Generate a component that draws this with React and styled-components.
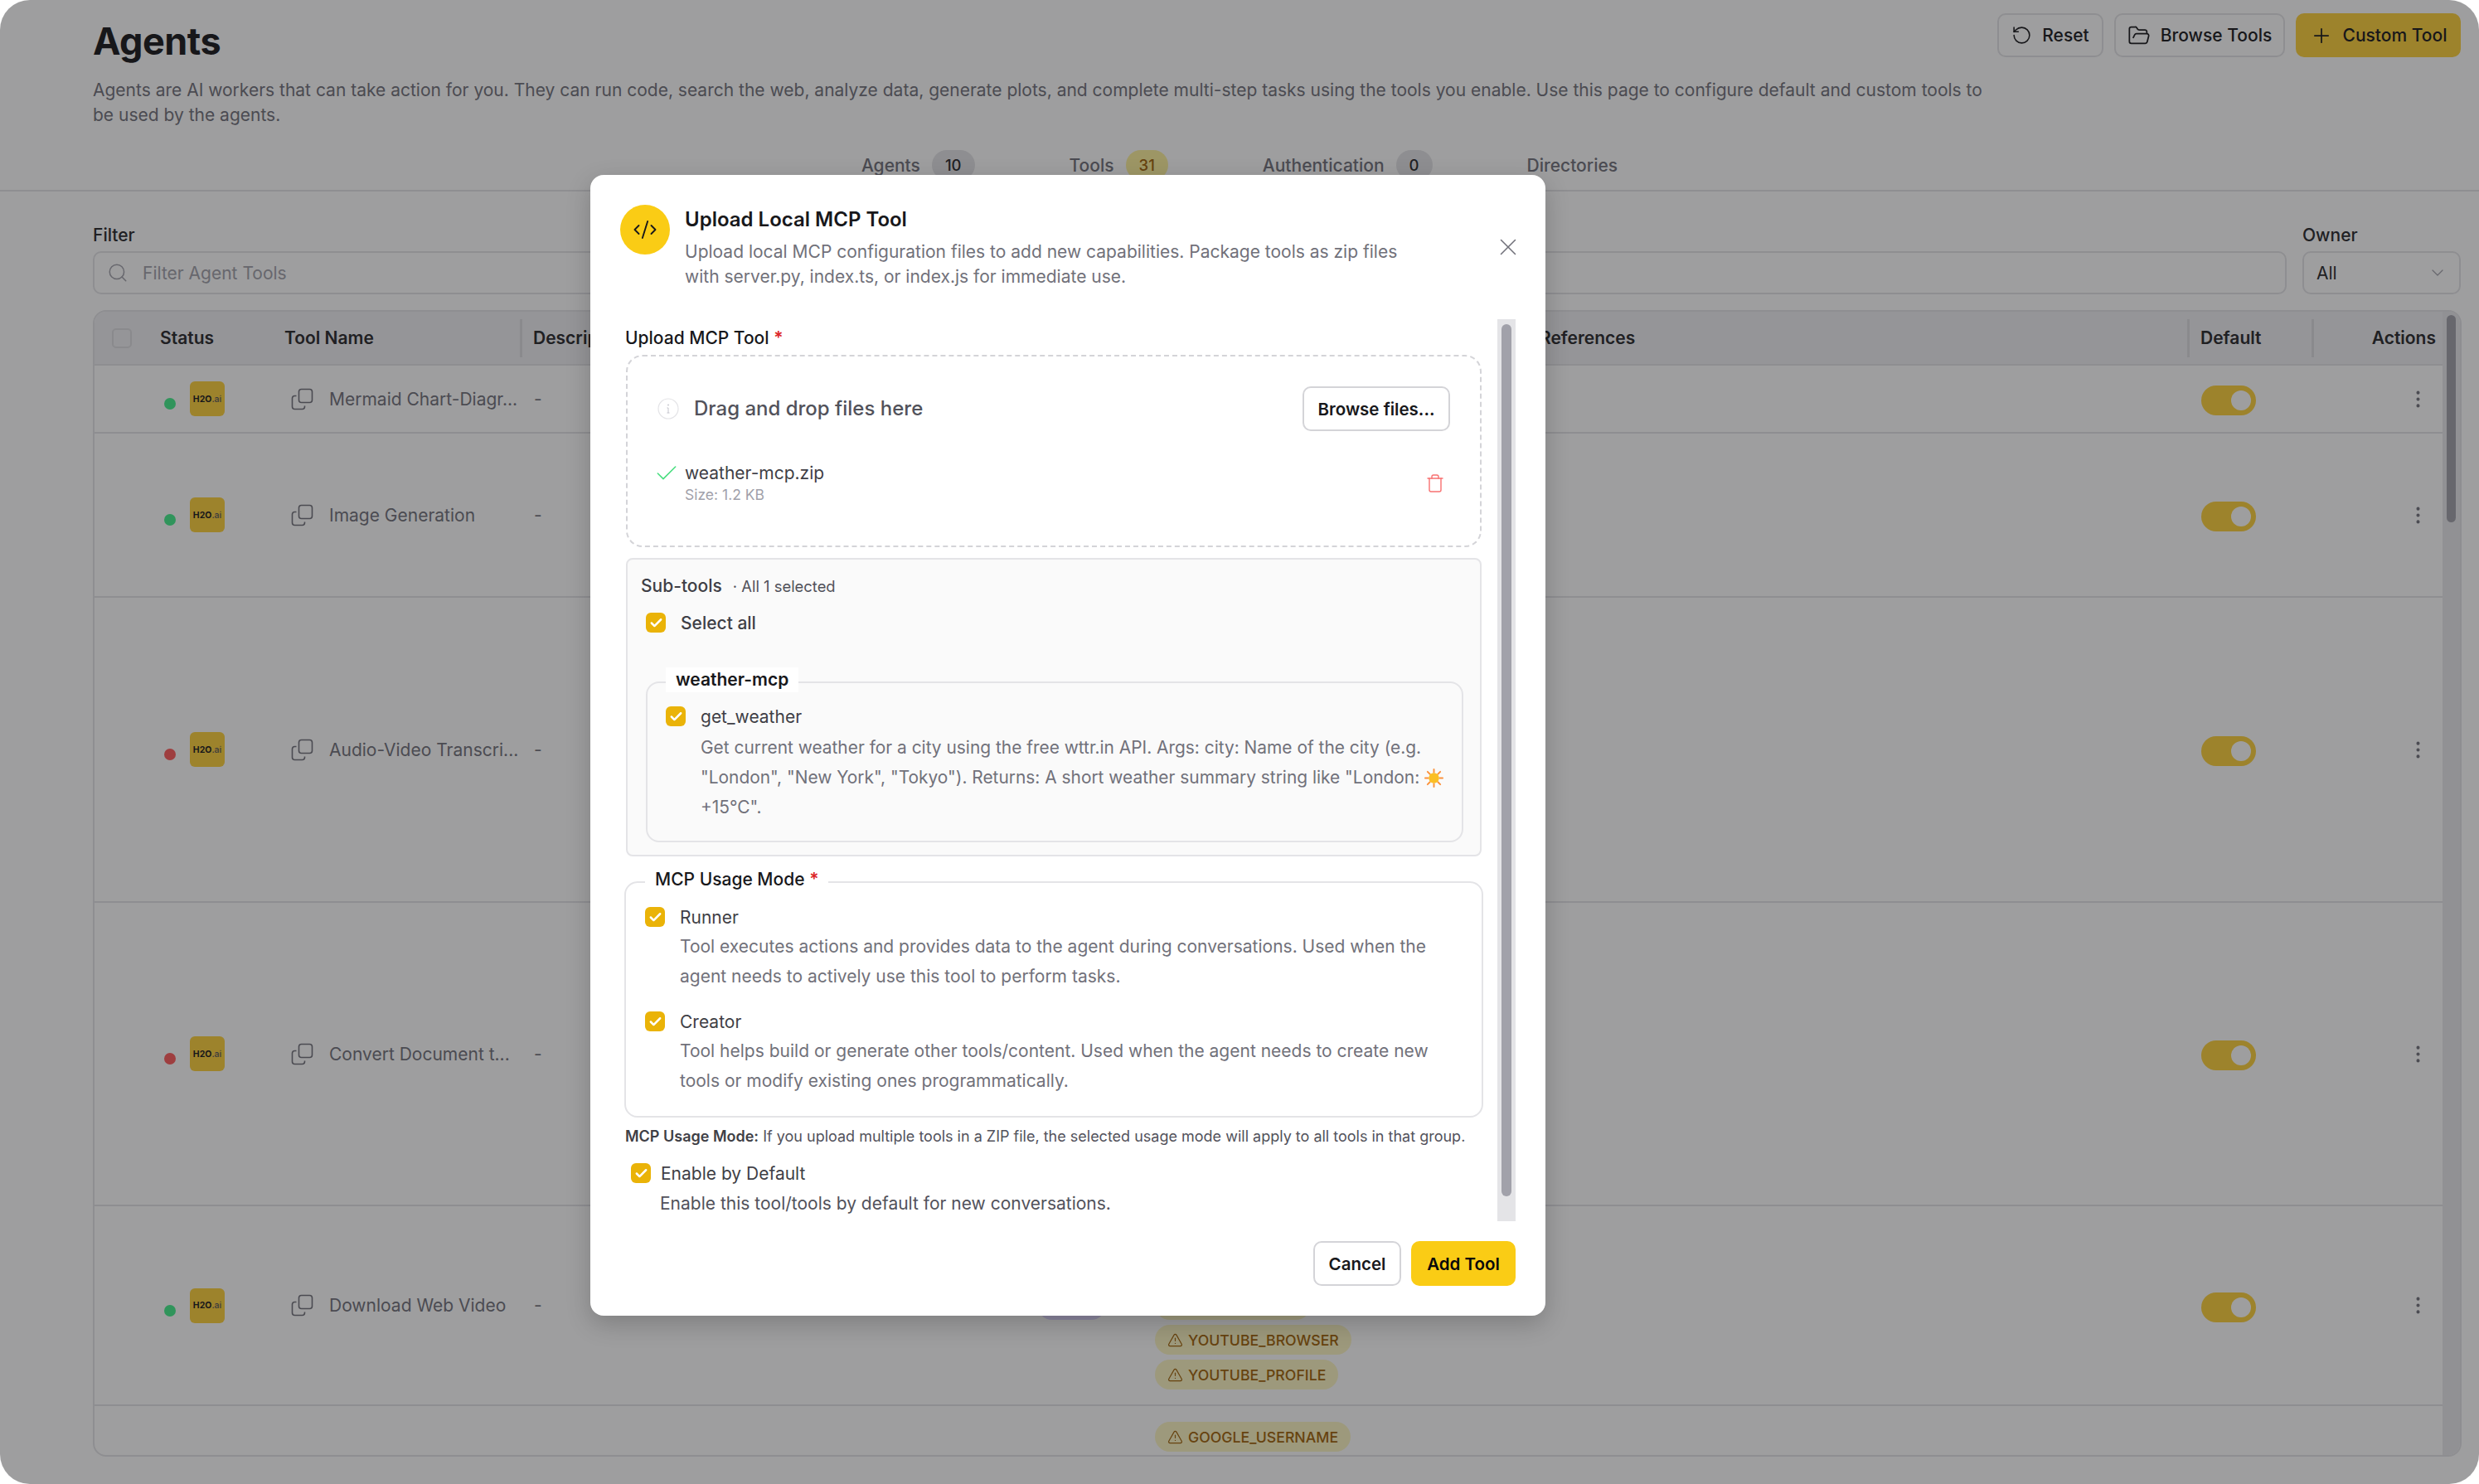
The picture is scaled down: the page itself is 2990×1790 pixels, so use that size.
import React from 'react';
import styled, { createGlobalStyle } from 'styled-components';
import {
  Check,
  ChevronDown,
  CodeXml,
  EllipsisVertical,
  FolderOpen,
  Plus,
  RotateCcw,
  Search,
  Trash,
  TriangleAlert,
  X,
} from 'lucide-react';

const GlobalStyle = createGlobalStyle`
  html, body {
    margin: 0;
    padding: 0;
    background: #fff;
  }
  * {
    box-sizing: border-box;
  }
  body {
    font-family: Inter, 'Liberation Sans', sans-serif;
    color: #18181b;
  }
  button {
    white-space: nowrap;
  }
`;

const Shell = styled.div`
  position: relative;
  width: 2990px;
  height: 1790px;
  border-radius: 36px;
  overflow: hidden;
  background: #fff;
`;

const TopBar = styled.header`
  position: relative;
  height: 231px;
  border-bottom: 2px solid #e4e4e7;
  padding: 16px 22px 0 112px;
`;

const TopRow = styled.div`
  display: flex;
  justify-content: space-between;
  align-items: flex-start;
`;

const Title = styled.h1`
  margin: 0 0 10px;
  font-size: 45px;
  line-height: 68px;
  font-weight: 700;
  letter-spacing: -0.5px;
  color: #18181b;
`;

const Intro = styled.p`
  margin: 0;
  width: 2290px;
  font-size: 21px;
  line-height: 30px;
  color: #71717a;
`;

const Actions = styled.div`
  display: flex;
  gap: 13px;
`;

const TopButton = styled.button`
  display: flex;
  align-items: center;
  justify-content: center;
  gap: 12px;
  width: ${p => p.$width}px;
  height: 53px;
  padding: 0;
  border: 2px solid ${p => (p.$primary ? '#fdd03a' : '#e4e4e7')};
  border-radius: 10px;
  background: ${p => (p.$primary ? '#fdd03a' : '#fff')};
  font: 500 21px Inter, sans-serif;
  color: #18181b;
`;

const Tabs = styled.nav`
  display: flex;
  justify-content: center;
  gap: 114px;
  margin: 27px 90px 0 0;
`;

const Tab = styled.div`
  display: flex;
  align-items: center;
  gap: 14px;
  height: 36px;
  font-size: 21px;
  font-weight: 500;
  color: #71717a;
`;

const TabCount = styled.span`
  display: flex;
  align-items: center;
  justify-content: center;
  min-width: 42px;
  height: 36px;
  padding: 0 16px;
  border-radius: 18px;
  font-size: 18.5px;
  background: ${p => (p.$active ? '#fdf19c' : '#e4e4e7')};
  color: ${p => (p.$active ? '#a16207' : '#27272a')};
`;

const Filters = styled.div`
  display: flex;
  gap: 19px;
  padding: 38px 22px 0 112px;
`;

const FilterGroup = styled.div`
  display: flex;
  flex-direction: column;
  gap: 4px;
  flex: ${p => (p.$grow ? 1 : '0 0 191px')};
`;

const FilterLabel = styled.label`
  font-size: 21px;
  line-height: 30px;
  font-weight: 500;
  color: #27272a;
`;

const FilterBox = styled.div`
  display: flex;
  align-items: center;
  justify-content: space-between;
  height: 52px;
  padding: 0 14px 0 15px;
  border: 2px solid #e4e4e7;
  border-radius: 10px;
  font-size: 21px;
  color: #27272a;
`;

const SearchWrap = styled.div`
  display: flex;
  align-items: center;
  gap: 17px;
  color: #a1a1aa;
`;

const Table = styled.section`
  display: flex;
  margin: 19px 21px 0 112px;
  height: 1383px;
  border: 2px solid #e4e4e7;
  border-radius: 16px;
  overflow: hidden;
`;

const TableBody = styled.div`
  flex: 1;
  min-width: 0;
`;

const COLUMNS = '79px 150px 284px 613px 137px 464px 797px 150px 158px';

const HeadRow = styled.div`
  display: grid;
  grid-template-columns: ${COLUMNS};
  align-items: center;
  height: 65px;
  border-bottom: 2px solid #e4e4e7;
  background: #f0f0f3;
`;

const HeadCell = styled.div`
  display: flex;
  align-items: center;
  gap: 13px;
  font-size: 21px;
  font-weight: 600;
  color: #27272a;
  justify-content: ${p => (p.$end ? 'flex-end' : 'flex-start')};
  padding-right: ${p => (p.$end ? '8px' : 0)};
`;

const HeadDivider = styled.span`
  display: block;
  width: 3px;
  height: 46px;
  background: #dcdce0;
  margin-right: ${p => (p.$push ? 'auto' : 0)};
`;

const HeadCheck = styled.span`
  display: block;
  width: 24px;
  height: 24px;
  margin-left: 21px;
  border: 2px solid #dcdce0;
  border-radius: 5px;
`;

const Row = styled.div`
  display: grid;
  grid-template-columns: ${COLUMNS};
  align-items: center;
  height: ${p => p.$height}px;
  border-bottom: ${p => (p.$last ? 'none' : '2px solid #e4e4e7')};
  font-size: 21px;
  color: #71717a;
`;

const StatusCell = styled.div`
  grid-column: 2;
  display: flex;
  align-items: center;
  gap: 17px;
  padding-left: 5px;
`;

const StatusDot = styled.span`
  width: 14px;
  height: 14px;
  margin-top: 12px;
  border-radius: 50%;
  background: ${p => (p.$ok ? '#43ee8a' : '#ff5a5a')};
`;

const Logo = styled.span`
  display: flex;
  align-items: center;
  justify-content: center;
  width: 42px;
  height: 42px;
  border-radius: 6px;
  background: #fdd03a;
  font-size: 10.5px;
  font-weight: 700;
  color: #18181b;

  i {
    font-style: normal;
    font-weight: 500;
    color: #52525b;
  }
`;

const NameCell = styled.div`
  display: flex;
  align-items: center;
  gap: 19px;
  padding-left: 8px;
  white-space: nowrap;
`;

const DescCell = styled.div`
  padding-left: 17px;
`;

const ToggleCell = styled.div`
  grid-column: 8;
  padding: 4px 0 0 17px;
`;

const Toggle = styled.span`
  display: flex;
  justify-content: flex-end;
  align-items: center;
  width: 66px;
  height: 36px;
  padding-right: 6px;
  border-radius: 18px;
  background: #fdd03a;

  &::after {
    content: '';
    width: 24px;
    height: 24px;
    border-radius: 50%;
    background: #fff;
  }
`;

const MenuCell = styled.div`
  display: flex;
  justify-content: flex-end;
  padding-right: 16px;
  color: #71717a;
`;

const KindCell = styled.div`
  grid-column: 5;
  align-self: end;
  padding: 0 0 102px 11px;
`;

const KindPill = styled.span`
  display: block;
  width: 83px;
  height: 36px;
  border-radius: 18px;
  background: #ddd6fe;
`;

const PillStack = styled.div`
  grid-column: 6;
  align-self: ${p => (p.$top ? 'start' : 'end')};
  display: flex;
  flex-direction: column;
  align-items: flex-start;
  gap: 6px;
  padding: ${p => (p.$top ? '19px 0 0 16px' : '0 0 18px 16px')};
`;

const Pill = styled.span`
  display: flex;
  align-items: center;
  gap: 6px;
  height: 36px;
  min-width: ${p => p.$min || 0}px;
  padding: 0 15px;
  border-radius: 18px;
  background: #fdf6c3;
  font-size: 17.7px;
  font-weight: 500;
  color: #a16207;
`;

const ScrollTrack = styled.div`
  flex: 0 0 21px;
  padding: 4px 5px;
  background: #e9e9ec;
`;

const ScrollThumb = styled.div`
  height: 250px;
  border-radius: 6px;
  background: #a1a1aa;
`;

const Backdrop = styled.div`
  position: absolute;
  inset: 0;
  background: rgba(24, 24, 27, 0.42);
`;

const Modal = styled.div`
  position: absolute;
  left: 712px;
  top: 211px;
  display: flex;
  flex-direction: column;
  width: 1152px;
  height: 1376px;
  border-radius: 16px;
  background: #fff;
  box-shadow: 0 10px 30px rgba(0, 0, 0, 0.2);
`;

const ModalHead = styled.div`
  display: flex;
  align-items: center;
  height: 174px;
  padding: 36px 28px 36px 36px;
`;

const ModalIcon = styled.span`
  flex: none;
  align-self: flex-start;
  display: flex;
  align-items: center;
  justify-content: center;
  width: 60px;
  height: 60px;
  border-radius: 50%;
  background: #facc15;
  color: #18181b;
`;

const ModalHeading = styled.div`
  flex: 1;
  margin-left: 18px;
`;

const ModalTitle = styled.h2`
  margin: 1px 0 7px;
  font-size: 24px;
  line-height: 34px;
  font-weight: 600;
  color: #18181b;
`;

const ModalText = styled.p`
  margin: 0;
  width: 880px;
  font-size: 21px;
  line-height: 30px;
  color: #71717a;
`;

const CloseButton = styled.span`
  display: flex;
  color: #71717a;
`;

const ModalBody = styled.div`
  flex: 1;
  min-height: 0;
  display: flex;
  margin: 0 36px 0 41px;
`;

const ModalScroll = styled.div`
  flex: 1;
  min-width: 0;
  padding-top: 8px;
  margin-right: 17px;
  overflow: hidden;
`;

const ModalTrack = styled.div`
  flex: 0 0 22px;
  padding: 6px 5px 0;
  background: #e4e4e7;
`;

const ModalThumb = styled.div`
  height: 1052px;
  border-radius: 6px;
  background: #a1a1aa;
`;

const FieldLabel = styled.div`
  margin: 0 0 5px 1px;
  font-size: 21px;
  line-height: 30px;
  font-weight: 500;
  color: #18181b;
`;

const Required = styled.span`
  color: #dc2626;
  font-weight: 600;
`;

const DropZone = styled.div`
  height: 232px;
  margin: 0 2px;
  padding: 36px 36px 0;
  border: 2px dashed #d4d4d8;
  border-radius: 20px;
`;

const DropRow = styled.div`
  display: flex;
  align-items: center;
  height: 54px;
  gap: 18px;
`;

const DropText = styled.span`
  flex: 1;
  margin-top: -2px;
  font-size: 24px;
  font-weight: 500;
  color: #52525b;
`;

const OutlineButton = styled.button`
  width: ${p => p.$width}px;
  height: 54px;
  padding: 0;
  border: 2px solid #d4d4d8;
  border-radius: 10px;
  background: #fff;
  font: 600 20.5px Inter, sans-serif;
  color: #18181b;
`;

const FileRow = styled.div`
  display: flex;
  align-items: flex-start;
  margin-top: 36px;
  color: #4ade80;

  > svg {
    margin: -1px 0 0 -5px;
  }
`;

const FileInfo = styled.div`
  flex: 1;
  margin-left: 6px;
`;

const FileName = styled.div`
  font-size: 21px;
  line-height: 30px;
  color: #3f3f46;
`;

const FileSize = styled.div`
  font-size: 17.5px;
  line-height: 22px;
  color: #a1a1aa;
`;

const FileDelete = styled.span`
  display: flex;
  margin: 15px 6px 0 0;
  color: #f87171;
`;

const SubPanel = styled.div`
  margin: 13px 2px 0;
  padding: 18px 20px 15px 22px;
  border: 2px solid #e4e4e7;
  border-radius: 8px;
  background: #fafafa;
`;

const SubHead = styled.div`
  display: flex;
  align-items: baseline;
  gap: 13px;
  margin-left: -6px;
  line-height: 28px;
  font-size: 21px;
  font-weight: 500;
  color: #3f3f46;

  small {
    font-size: 18.4px;
    font-weight: 400;
    color: #52525b;
  }
`;

const CheckLine = styled.div`
  display: flex;
  align-items: center;
  gap: ${p => p.$gap || 18}px;
  margin-top: ${p => p.$top || 0}px;
  min-height: 28px;
  font-size: 21px;
  font-weight: ${p => (p.$bold ? 500 : 400)};
  color: #3f3f46;
`;

const Box = styled.span`
  flex: none;
  display: flex;
  align-items: center;
  justify-content: center;
  width: 24px;
  height: 24px;
  border-radius: 6px;
  background: #eab308;
  color: #fff;
`;

const GroupBox = styled.div`
  position: relative;
  margin-top: ${p => p.$top}px;
  padding: ${p => p.$pad};
  border: 2px solid #e4e4e7;
  border-radius: 16px;
`;

const GroupLegend = styled.div`
  position: absolute;
  left: ${p => p.$left}px;
  top: -19px;
  padding: 0 12px;
  font-size: 21px;
  line-height: 30px;
  font-weight: ${p => (p.$strong ? 600 : 500)};
  background: #fff;
  color: #18181b;
`;

const OptionText = styled.p`
  margin: ${p => p.$top || 4}px 0 0 42px;
  width: ${p => p.$width}px;
  font-size: ${p => p.$size || 21}px;
  line-height: 36px;
  color: #71717a;

  svg {
    vertical-align: -5px;
  }
`;

const Option = styled.div`
  & + & {
    margin-top: 22px;
  }
`;

const Note = styled.p`
  margin: 10px 0 0 1px;
  font-size: 18px;
  line-height: 26px;
  color: #52525b;

  b {
    font-weight: 600;
    color: #3f3f46;
  }
`;

const EnableBlock = styled.div`
  margin: 17px 0 0 8px;
`;

const EnableText = styled.p`
  margin: 5px 0 0 35px;
  font-size: 21px;
  line-height: 36px;
  color: #52525b;
`;

const ModalFoot = styled.div`
  display: flex;
  justify-content: flex-end;
  gap: 12px;
  padding: 24px 36px 36px 0;
`;

const PrimaryButton = styled.button`
  width: 126px;
  height: 54px;
  padding: 0;
  border: none;
  border-radius: 10px;
  background: #facc15;
  font: 600 20.5px Inter, sans-serif;
  color: #09090b;
`;

const CopyIcon = () => (
  <svg width="27" height="27" viewBox="0 0 27 27" fill="none" stroke="currentColor" strokeWidth="1.6">
    <rect x="9.5" y="1.5" width="16" height="16" rx="3" />
    <path d="M6.5 9.5H4.5a3 3 0 0 0-3 3v10a3 3 0 0 0 3 3h9a3 3 0 0 0 3-3v-1" />
  </svg>
);

const SunIcon = () => (
  <svg width="23" height="23" viewBox="0 0 24 24">
    <g stroke="#fb923c" strokeWidth="2" strokeLinecap="round">
      <path d="M12 1v4M12 19v4M1 12h4M19 12h4M4 4l3 3M17 17l3 3M20 4l-3 3M7 17l-3 3" />
    </g>
    <circle cx="12" cy="12" r="6.5" fill="#fbbf24" />
  </svg>
);

const InfoIcon = () => (
  <svg width="26" height="26" viewBox="0 0 26 26" fill="none">
    <circle cx="13" cy="13" r="12" stroke="#e4e4e7" strokeWidth="1.2" />
    <path d="M13 12v6M11.5 18h3M11.5 12H13" stroke="#c4c4cc" strokeWidth="1" />
    <circle cx="13" cy="8.5" r="0.9" fill="#c4c4cc" />
  </svg>
);

const TickBox = () => (
  <Box>
    <Check size={17} strokeWidth={3.5} />
  </Box>
);

const rows = [
  { name: 'Mermaid Chart-Diagr...', ok: true, height: 82 },
  { name: 'Image Generation', ok: true, height: 198 },
  { name: 'Audio-Video Transcri...', ok: false, height: 368 },
  { name: 'Convert Document t...', ok: false, height: 366 },
];

const RowLead = ({ name, ok }) => (
  <>
    <StatusCell>
      <StatusDot $ok={ok} />
      <Logo>
        H2O<i>.ai</i>
      </Logo>
    </StatusCell>
    <NameCell>
      <CopyIcon />
      {name}
    </NameCell>
    <DescCell>-</DescCell>
  </>
);

const RowTail = () => (
  <>
    <ToggleCell>
      <Toggle />
    </ToggleCell>
    <MenuCell>
      <EllipsisVertical size={27} strokeWidth={1.6} />
    </MenuCell>
  </>
);

const VarPill = ({ label }) => (
  <Pill>
    <TriangleAlert size={19} strokeWidth={1.5} />
    {label}
  </Pill>
);

export default function App() {
  return (
    <Shell>
      <GlobalStyle />
      <TopBar>
        <TopRow>
          <div>
            <Title>Agents</Title>
            <Intro>
              Agents are AI workers that can take action for you. They can run code, search the web, analyze data,
              generate plots, and complete multi-step tasks using the tools you enable. Use this page to configure
              default and custom tools to be used by the agents.
            </Intro>
          </div>
          <Actions>
            <TopButton $width={128}>
              <RotateCcw size={25} strokeWidth={1.5} />
              Reset
            </TopButton>
            <TopButton $width={206}>
              <FolderOpen size={28} strokeWidth={1.5} />
              Browse Tools
            </TopButton>
            <TopButton $primary $width={199}>
              <Plus size={28} strokeWidth={1.5} />
              Custom Tool
            </TopButton>
          </Actions>
        </TopRow>
        <Tabs>
          <Tab>
            Agents <TabCount>10</TabCount>
          </Tab>
          <Tab>
            Tools <TabCount $active>31</TabCount>
          </Tab>
          <Tab>
            Authentication <TabCount>0</TabCount>
          </Tab>
          <Tab>Directories</Tab>
        </Tabs>
      </TopBar>

      <Filters>
        <FilterGroup $grow>
          <FilterLabel>Filter</FilterLabel>
          <FilterBox>
            <SearchWrap>
              <Search size={26} strokeWidth={1.4} />
              Filter Agent Tools
            </SearchWrap>
          </FilterBox>
        </FilterGroup>
        <FilterGroup>
          <FilterLabel>Owner</FilterLabel>
          <FilterBox>
            All
            <ChevronDown size={24} strokeWidth={1.2} color="#a1a1aa" />
          </FilterBox>
        </FilterGroup>
      </Filters>

      <Table>
        <TableBody>
          <HeadRow>
            <HeadCheck />
            <HeadCell>Status</HeadCell>
            <HeadCell>Tool Name</HeadCell>
            <HeadCell>
              <HeadDivider />
              Description
            </HeadCell>
            <HeadCell />
            <HeadCell />
            <HeadCell>
              <HeadDivider />
              References
            </HeadCell>
            <HeadCell>
              <HeadDivider />
              Default
            </HeadCell>
            <HeadCell $end>
              <HeadDivider $push />
              Actions
            </HeadCell>
          </HeadRow>
          {rows.map(tool => (
            <Row key={tool.name} $height={tool.height}>
              <RowLead name={tool.name} ok={tool.ok} />
              <RowTail />
            </Row>
          ))}
          <Row $height={241}>
            <RowLead name="Download Web Video" ok />
            <KindCell>
              <KindPill />
            </KindCell>
            <PillStack>
              <Pill $min={188} />
              <VarPill label="YOUTUBE_BROWSER" />
              <VarPill label="YOUTUBE_PROFILE" />
            </PillStack>
            <RowTail />
          </Row>
          <Row $height={59} $last>
            <PillStack $top>
              <VarPill label="GOOGLE_USERNAME" />
            </PillStack>
          </Row>
        </TableBody>
        <ScrollTrack>
          <ScrollThumb />
        </ScrollTrack>
      </Table>

      <Backdrop />

      <Modal>
        <ModalHead>
          <ModalIcon>
            <CodeXml size={30} strokeWidth={1.5} />
          </ModalIcon>
          <ModalHeading>
            <ModalTitle>Upload Local MCP Tool</ModalTitle>
            <ModalText>
              Upload local MCP configuration files to add new capabilities. Package tools as zip files with server.py,
              index.ts, or index.js for immediate use.
            </ModalText>
          </ModalHeading>
          <CloseButton>
            <X size={34} strokeWidth={1.1} />
          </CloseButton>
        </ModalHead>

        <ModalBody>
          <ModalScroll>
            <FieldLabel>
              Upload MCP Tool <Required>*</Required>
            </FieldLabel>
            <DropZone>
              <DropRow>
                <InfoIcon />
                <DropText>Drag and drop files here</DropText>
                <OutlineButton $width={178}>Browse files...</OutlineButton>
              </DropRow>
              <FileRow>
                <Check size={32} strokeWidth={1.2} />
                <FileInfo>
                  <FileName>weather-mcp.zip</FileName>
                  <FileSize>Size: 1.2 KB</FileSize>
                </FileInfo>
                <FileDelete>
                  <Trash size={24} strokeWidth={1.4} />
                </FileDelete>
              </FileRow>
            </DropZone>

            <SubPanel>
              <SubHead>
                Sub-tools <small>· All 1 selected</small>
              </SubHead>
              <CheckLine $top={16} $bold>
                <TickBox />
                Select all
              </CheckLine>
              <GroupBox $top={57} $pad="26px 20px 22px 22px">
                <GroupLegend $left={22} $strong>
                  weather-mcp
                </GroupLegend>
                <CheckLine>
                  <TickBox />
                  get_weather
                </CheckLine>
                <OptionText $width={930} $top={6} $size={20.9}>
                  Get current weather for a city using the free wttr.in API. Args: city: Name of the city (e.g.
                  "London", "New York", "Tokyo"). Returns: A short weather summary string like "London: <SunIcon />
                  <br />
                  +15°C".
                </OptionText>
              </GroupBox>
            </SubPanel>

            <GroupBox $top={30} $pad="27px 23px 24px 23px">
              <GroupLegend $left={23}>
                MCP Usage Mode <Required>*</Required>
              </GroupLegend>
              <Option>
                <CheckLine>
                  <TickBox />
                  Runner
                </CheckLine>
                <OptionText $width={940}>
                  Tool executes actions and provides data to the agent during conversations. Used when the agent needs
                  to actively use this tool to perform tasks.
                </OptionText>
              </Option>
              <Option>
                <CheckLine>
                  <TickBox />
                  Creator
                </CheckLine>
                <OptionText $width={940}>
                  Tool helps build or generate other tools/content. Used when the agent needs to create new tools or
                  modify existing ones programmatically.
                </OptionText>
              </Option>
            </GroupBox>

            <Note>
              <b>MCP Usage Mode:</b> If you upload multiple tools in a ZIP file, the selected usage mode will apply to
              all tools in that group.
            </Note>

            <EnableBlock>
              <CheckLine $gap={12}>
                <TickBox />
                Enable by Default
              </CheckLine>
              <EnableText>Enable this tool/tools by default for new conversations.</EnableText>
            </EnableBlock>
          </ModalScroll>
          <ModalTrack>
            <ModalThumb />
          </ModalTrack>
        </ModalBody>

        <ModalFoot>
          <OutlineButton $width={106}>Cancel</OutlineButton>
          <PrimaryButton>Add Tool</PrimaryButton>
        </ModalFoot>
      </Modal>
    </Shell>
  );
}
